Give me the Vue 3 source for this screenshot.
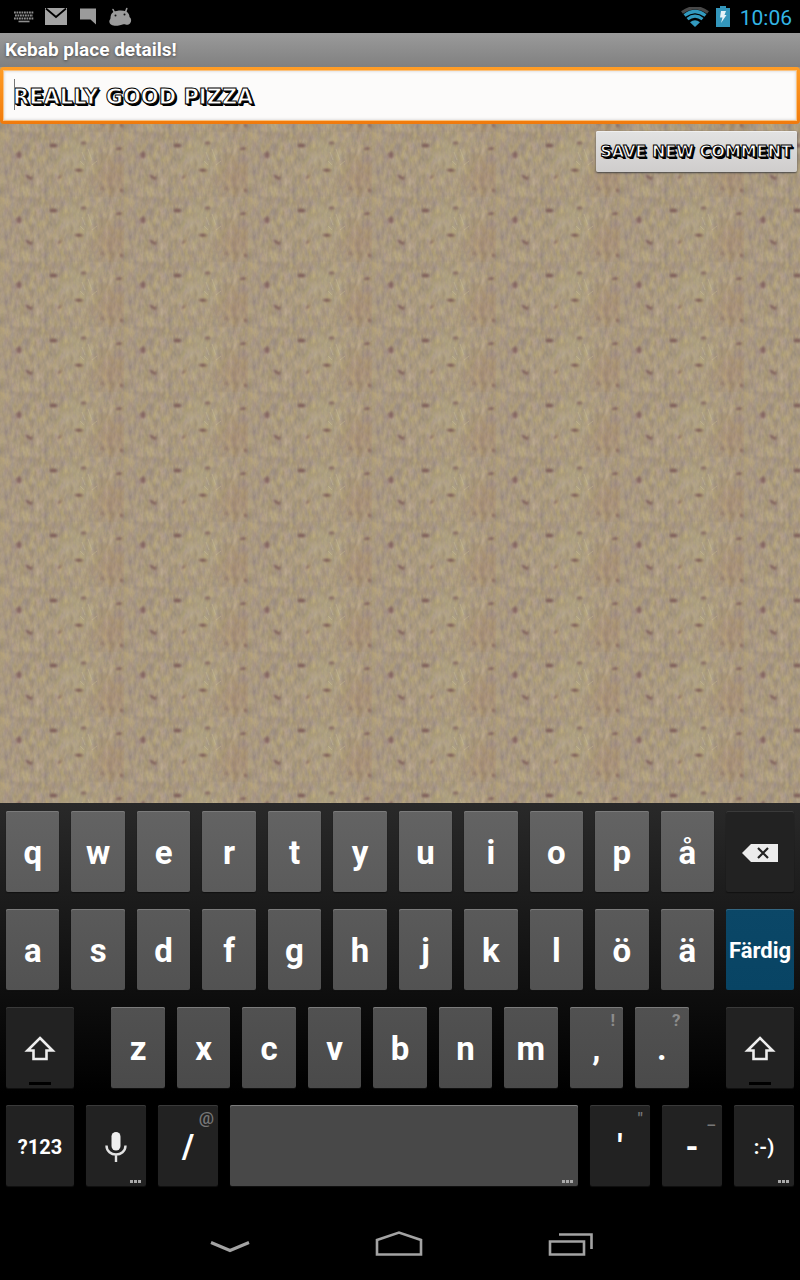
<script setup>
import { ref } from 'vue'

const comment = ref('REALLY GOOD PIZZA')

const rowOne = ['q', 'w', 'e', 'r', 't', 'y', 'u', 'i', 'o', 'p', 'å']
const rowTwo = ['a', 's', 'd', 'f', 'g', 'h', 'j', 'k', 'l', 'ö', 'ä']
const rowThree = [
  { label: 'z' },
  { label: 'x' },
  { label: 'c' },
  { label: 'v' },
  { label: 'b' },
  { label: 'n' },
  { label: 'm' },
  { label: ',', hint: '!' },
  { label: '.', hint: '?' }
]
</script>

<template>
  <div class="screen">
    <header class="status">
      <div class="status-side">
        <svg width="20" height="12" viewBox="0 0 20 12" aria-hidden="true">
          <path d="M0 1.5H20M1 4.5H19M0 7.5H20" stroke="#8e8e8e" stroke-width="2" stroke-dasharray="1.8 .7" />
          <path d="M4.5 10.5H15.5" stroke="#8e8e8e" stroke-width="1.6" />
        </svg>
        <svg class="mail" width="22" height="18" viewBox="0 0 22 18" aria-hidden="true">
          <path d="M0 0H22V17H0Z" fill="#a3a3a3" />
          <path d="M1 .5L11 9L21 .5" fill="none" stroke="#000" stroke-width="1.8" />
        </svg>
        <svg class="chat" width="16" height="17" viewBox="0 0 16 17" aria-hidden="true">
          <path d="M0 .5H16V16.5L10.5 11.5H0Z" fill="#9b9b9b" />
        </svg>
        <svg class="droid" width="24" height="20" viewBox="0 0 24 20" aria-hidden="true">
          <path d="M5 2.5L6.5 5.5M18.8 1.5L17.5 5" stroke="#9b9b9b" stroke-width="1.6" stroke-linecap="round" />
          <path d="M5.5 5C9 3.5 14 3 18.5 4.5C20.5 6 21.5 8 21.5 10C23.5 11.5 23.8 14.5 22 16.5C20.5 18 18.5 18 17 17.2C14 17 12.5 18.8 8 18.8C4.5 18.8 1.5 17.5 1.3 14.5C1.3 13 2.5 12.5 2.5 11C2.5 8 3.5 6 5.5 5Z" fill="#9b9b9b" />
          <circle cx="7.5" cy="8.5" r="1" fill="#111" /><circle cx="16.5" cy="7.5" r="1" fill="#111" />
        </svg>
      </div>
      <div class="status-side">
        <svg width="28" height="20" viewBox="0 0 28 20" aria-hidden="true">
          <path d="M1 5.5Q14 -4 27 5.5" fill="none" stroke="#484848" stroke-width="3.2" />
          <path d="M3.5 8.5Q14 .5 24.5 8.5" fill="none" stroke="#329abf" stroke-width="3.2" />
          <path d="M6.5 12.2Q14 6 21.5 12.2" fill="none" stroke="#329abf" stroke-width="3" />
          <path d="M9 15.2Q14 11.2 19 15.2L14 20Z" fill="#329abf" />
        </svg>
        <svg class="battery" width="14" height="21" viewBox="0 0 14 21" aria-hidden="true">
          <path d="M4 0H10V2H14V21H0V2H4Z" fill="#3396bb" />
          <path d="M5 5H10L8.5 9H10.5L5 17L6.5 11.5H4Z" fill="#e4f3f8" />
        </svg>
        <time class="clock">10:06</time>
      </div>
    </header>

    <h1 class="title">Kebab place details!</h1>

    <main class="content">
      <svg class="texture" width="100%" height="100%" aria-hidden="true">
        <defs>
          <filter id="grain" x="0" y="0" width="1" height="1" color-interpolation-filters="sRGB">
            <feTurbulence type="fractalNoise" baseFrequency="0.2 0.09" numOctaves="3" seed="8" stitchTiles="stitch" />
            <feColorMatrix values=".18 .05 0 0 .55  .15 .08 0 0 .485  .06 0 .14 0 .4  0 0 0 0 1" />
          </filter>
          <filter id="soften" x="-.2" y="-.2" width="1.4" height="1.4"><feGaussianBlur stdDeviation="1" /></filter>
          <filter id="haze" x="-.8" y="-.8" width="2.6" height="2.6"><feGaussianBlur stdDeviation="9" /></filter>
          <pattern id="crust" width="124" height="65" patternUnits="userSpaceOnUse">
            <rect width="124" height="65" filter="url(#grain)" />
            <ellipse cx="112" cy="44" rx="18" ry="20" fill="#a0785e" opacity=".28" filter="url(#haze)" />
            <ellipse cx="80" cy="24" rx="18" ry="22" fill="#b9b184" opacity=".3" filter="url(#haze)" />
            <ellipse cx="6" cy="30" rx="7" ry="34" fill="#a69282" opacity=".35" filter="url(#haze)" />
            <g fill="#734f51" filter="url(#soften)">
              <ellipse cx="19" cy="23" rx="2.5" ry="3.5" opacity=".7" />
              <ellipse cx="53.5" cy="13.5" rx="4" ry="2" opacity=".8" />
              <ellipse cx="83.5" cy="11" rx="2.8" ry="1.6" opacity=".7" />
              <path d="M25 42L33 46L31 48L27 46Z" opacity=".8" />
              <path d="M63 41L60 47L57 46L60 44Z" opacity=".65" />
              <path d="M74 38Q80 35 84 39L78 40Z" opacity=".85" />
              <path d="M115 18Q119 13 123 17L119 18Z" opacity=".8" />
              <path d="M120 56L123 58V61L120 59Z" opacity=".7" />
              <circle cx="102" cy="56" r="1.5" opacity=".35" />
            </g>
            <path d="M82 20L85 28M88 17L92 28M80 29L84 33M92 33L97 29" stroke="#d0c79c" stroke-width="1" opacity=".35" />
          </pattern>
        </defs>
        <rect width="100%" height="100%" fill="url(#crust)" />
      </svg>

      <form class="form" @submit.prevent>
        <div class="field">
          <input v-model="comment" class="field-input" type="text" aria-label="Comment" spellcheck="false" />
        </div>
        <button class="save" type="submit">SAVE NEW COMMENT</button>
      </form>
    </main>

    <section class="keyboard" aria-label="Keyboard">
      <div class="row row-letters">
        <button v-for="k in rowOne" :key="k" type="button" class="key">{{ k }}</button>
        <button type="button" class="key dark" aria-label="Delete">
          <svg width="36" height="18" viewBox="0 0 36 18" aria-hidden="true">
            <path d="M0 9L9 0H36V18H9Z" fill="#ececec" />
            <path d="M16 4L26 14M26 4L16 14" stroke="#222" stroke-width="2.2" />
          </svg>
        </button>
      </div>
      <div class="row row-letters second">
        <button v-for="k in rowTwo" :key="k" type="button" class="key">{{ k }}</button>
        <button type="button" class="key done">Färdig</button>
      </div>
      <div class="row row-shift third">
        <button type="button" class="key dark" aria-label="Shift">
          <svg width="32" height="26" viewBox="0 0 32 26" aria-hidden="true">
            <path d="M16 2L28.5 14.5H22.5V23H9.5V14.5H3.5Z" fill="none" stroke="#eee" stroke-width="2.6" />
          </svg>
          <span class="lock"></span>
        </button>
        <span></span>
        <button v-for="k in rowThree" :key="k.label" type="button" class="key">
          {{ k.label }}<span v-if="k.hint" class="hint">{{ k.hint }}</span>
        </button>
        <span></span>
        <button type="button" class="key dark" aria-label="Shift">
          <svg width="32" height="26" viewBox="0 0 32 26" aria-hidden="true">
            <path d="M16 2L28.5 14.5H22.5V23H9.5V14.5H3.5Z" fill="none" stroke="#eee" stroke-width="2.6" />
          </svg>
          <span class="lock"></span>
        </button>
      </div>
      <div class="row row-bottom fourth">
        <button type="button" class="key dark small">?123</button>
        <button type="button" class="key dark" aria-label="Voice input">
          <svg width="22" height="30" viewBox="0 0 22 30" aria-hidden="true">
            <rect x="6.5" y="0" width="9" height="18.5" rx="4.5" fill="#efefef" />
            <path d="M1.5 13.5C1.5 25.5 20.5 25.5 20.5 13.5M11 22.5V30" fill="none" stroke="#e2e2e2" stroke-width="2.4" />
          </svg>
          <span class="more"><i></i><i></i><i></i></span>
        </button>
        <button type="button" class="key dark">/<span class="hint">@</span></button>
        <button type="button" class="key" aria-label="Space"><span class="more"><i></i><i></i><i></i></span></button>
        <button type="button" class="key dark">'<span class="hint wide">"</span></button>
        <button type="button" class="key dark">-<span class="hint wide">_</span></button>
        <button type="button" class="key dark small">:-)<span class="more"><i></i><i></i><i></i></span></button>
      </div>
    </section>

    <nav class="nav" aria-label="System">
      <button type="button" aria-label="Hide keyboard">
        <svg width="40" height="28" viewBox="0 0 40 28" aria-hidden="true">
          <path d="M1 12.5L20 20.5L39 12.5" fill="none" stroke="#a3a3a3" stroke-width="3" />
        </svg>
      </button>
      <button type="button" aria-label="Home">
        <svg width="48" height="28" viewBox="0 0 48 28" aria-hidden="true">
          <path d="M2 10L24 2.5L46 10V24.5H2Z" fill="none" stroke="#a3a3a3" stroke-width="2.6" />
        </svg>
      </button>
      <button type="button" aria-label="Recent apps">
        <svg width="46" height="28" viewBox="0 0 46 28" aria-hidden="true">
          <path d="M2 11.5H36V24.5H2ZM11 4.5H43.5V19" fill="none" stroke="#a3a3a3" stroke-width="2.6" />
        </svg>
      </button>
    </nav>
  </div>
</template>

<style>
body {
  background: #000;
}
</style>

<style scoped>
.screen {
  display: flex;
  flex-direction: column;
  min-height: 100vh;
  background: #000;
  font-family: Roboto, "Noto Sans", sans-serif;
}
button {
  font-family: inherit;
  cursor: pointer;
}
.status {
  display: flex;
  align-items: center;
  justify-content: space-between;
  height: 33px;
  padding: 0 8px 0 14px;
}
.status-side {
  display: flex;
  align-items: center;
}
.mail {
  margin-left: 11px;
}
.chat {
  margin-left: 13px;
}
.droid {
  margin-left: 12px;
}
.battery {
  margin-left: 7px;
}
.clock {
  margin-left: 10px;
  padding-top: 2px;
  color: #33b5e5;
  font-size: 21px;
}
.title {
  margin: 0;
  padding: 0 5px;
  background: linear-gradient(#9a9a9a, #808080);
  color: #fff;
  font-size: 19px;
  font-weight: 700;
  line-height: 34px;
  text-shadow: 0 1px 3px #444;
}
.content {
  position: relative;
  flex: 1;
  background: #a89a7c;
}
.texture {
  position: absolute;
  inset: 0;
}
.form {
  position: relative;
  display: flex;
  flex-direction: column;
}
.field {
  position: relative;
  padding: 4px;
  border-radius: 4px;
  background: linear-gradient(#ff9d26, #f07a0c);
}
.field::before {
  content: "";
  position: absolute;
  top: 12px;
  left: 14px;
  width: 1px;
  height: 31px;
  background: #777;
}
.field-input {
  display: block;
  box-sizing: border-box;
  width: 100%;
  height: 49px;
  padding: 2px 9px 0;
  border: 0;
  outline: 1px solid #fbc27e;
  background: #fcfbfa;
  box-shadow: inset 0 0 3px #ccc;
}
.field-input,
.save {
  color: #fff;
  font-family: "DejaVu Sans", sans-serif;
  font-weight: 700;
  -webkit-text-stroke: 1px #000;
  text-shadow: 1px 1px 0 #000, 2px 2px 0 #000;
}
.field-input {
  font-size: 21px;
}
.save {
  align-self: flex-end;
  height: 41px;
  margin: 7px 3px 0;
  padding: 0 5px 0 4px;
  border: 0;
  border-radius: 2px;
  background: linear-gradient(#e2e2e2, #cfcdcc);
  box-shadow: 0 1px 2px #444, inset 0 1px 0 #efefef;
  font-size: 16px;
}
.keyboard {
  padding-top: 8px;
  background: linear-gradient(#292929, #000 290px);
}
.row {
  display: grid;
  height: 98px;
}
.row-letters {
  grid-template-columns: repeat(11, 9fr) 11fr;
}
.row-shift {
  grid-template-columns: 22fr 7fr repeat(9, 18fr) 7fr 22fr;
}
.row-bottom {
  grid-template-columns: 10fr 9fr 9fr 45fr 9fr 9fr 9fr;
}
.key {
  position: relative;
  display: flex;
  align-items: center;
  justify-content: center;
  min-width: 0;
  height: 81px;
  margin: 0 6px;
  padding: 2px 0 0;
  border: 0;
  border-radius: 2px;
  background: linear-gradient(#636363, #5b5b5b);
  box-shadow: inset 0 1px 0 #7b7b7b, 0 1px 1px #111;
  color: #fff;
  font-size: 33px;
  font-weight: 700;
}
.second .key {
  background: linear-gradient(#5a5a5a, #525252);
}
.third .key {
  background: linear-gradient(#515151, #4a4a4a);
}
.fourth .key {
  background: #484848;
}
.row .dark {
  background: #222;
  box-shadow: inset 0 1px 0 #3a3a3a, 0 1px 1px #111;
}
.row .done {
  background: linear-gradient(#0b4767, #084464);
  box-shadow: inset 0 1px 0 #346681;
  font-size: 22px;
}
.row .small {
  font-size: 20px;
}
.hint {
  position: absolute;
  top: 3px;
  right: 8px;
  color: #8c8c8c;
  font-size: 17px;
  font-weight: 700;
  line-height: 20px;
}
.row-bottom .hint {
  right: 4px;
  color: #777;
  font-weight: 500;
}
.row-bottom .wide {
  right: 7px;
}
.lock {
  position: absolute;
  bottom: 3px;
  width: 22px;
  height: 3px;
  background: #000;
}
.more {
  position: absolute;
  right: 5px;
  bottom: 3px;
  display: flex;
  gap: 1px;
}
.more i {
  width: 3px;
  height: 3px;
  background: #aaa;
}
.nav {
  display: flex;
  justify-content: center;
  gap: 125px;
  height: 77px;
  padding: 4px 0 0 4px;
  box-sizing: border-box;
}
.nav button {
  display: flex;
  align-items: center;
  padding: 0;
  border: 0;
  background: transparent;
}
</style>
